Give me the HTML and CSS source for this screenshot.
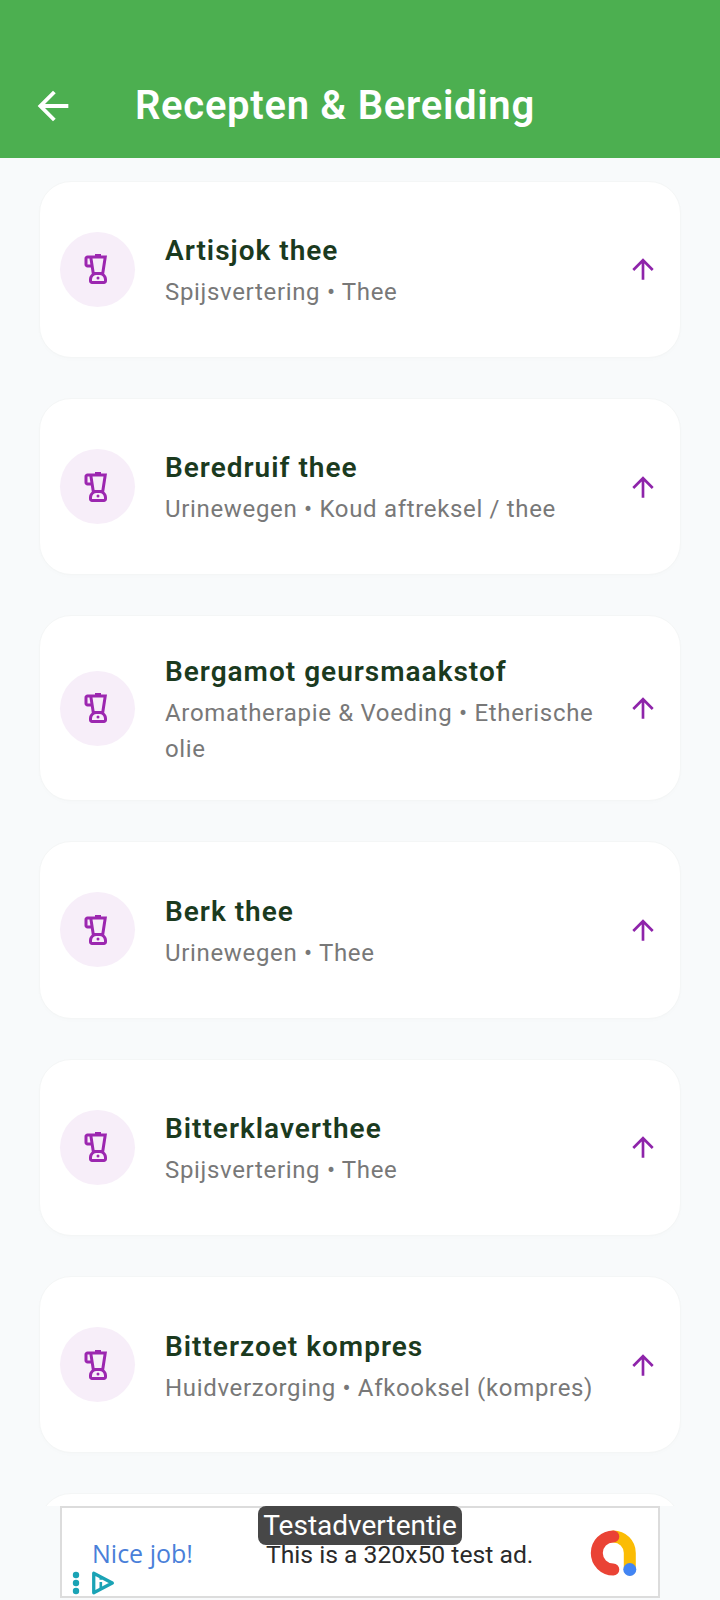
FILE: index.html
```html
<!DOCTYPE html>
<html lang="nl">
<head>
  <meta charset="utf-8">
  <meta name="viewport" content="width=device-width, initial-scale=1.0">
  <title>Recepten &amp; Bereiding</title>
  <link rel="stylesheet" href="styles.css">
</head>
<body>
  <svg class="icon-defs" width="0" height="0" aria-hidden="true">
    <defs>
      <symbol id="blender" viewBox="0 0 24 24">
        <path d="M16.13 15.13L18 3h-4V2h-4v1H5C3.9 3 3 3.9 3 5v4c0 1.1.9 2 2 2h2.23l.64 4.13C6.74 16.05 6 17.43 6 19v1c0 1.1.9 2 2 2h8c1.1 0 2-.9 2-2v-1c0-1.57-.74-2.95-1.87-3.87zM5 9V5h1.31l.62 4H5zm10.67-4l-1.38 9H9.72L8.33 5h7.34zM16 20H8v-1c0-1.65 1.35-3 3-3h2c1.65 0 3 1.35 3 3v1z"/>
        <circle cx="12" cy="18" r="1"/>
      </symbol>
      <symbol id="arrow-up" viewBox="0 0 24 24">
        <path d="M4 12l1.41 1.41L11 7.83V20h2V7.83l5.58 5.59L20 12l-8-8-8 8z"/>
      </symbol>
    </defs>
  </svg>

  <header class="app-bar">
    <svg class="back" viewBox="0 0 24 24"><path d="M20 11H7.83l5.59-5.59L12 4l-8 8 8 8 1.41-1.41L7.83 13H20v-2z"/></svg>
    <h1 class="app-title">Recepten &amp; Bereiding</h1>
  </header>

  <main class="list">
    <article class="card">
      <div class="avatar"><svg class="avatar-icon"><use href="#blender"/></svg></div>
      <div class="card-text">
        <h2 class="card-title">Artisjok thee</h2>
        <p class="card-sub">Spijsvertering • Thee</p>
      </div>
      <svg class="card-arrow"><use href="#arrow-up"/></svg>
    </article>
    <article class="card">
      <div class="avatar"><svg class="avatar-icon"><use href="#blender"/></svg></div>
      <div class="card-text">
        <h2 class="card-title">Beredruif thee</h2>
        <p class="card-sub">Urinewegen • Koud aftreksel / thee</p>
      </div>
      <svg class="card-arrow"><use href="#arrow-up"/></svg>
    </article>
    <article class="card">
      <div class="avatar"><svg class="avatar-icon"><use href="#blender"/></svg></div>
      <div class="card-text">
        <h2 class="card-title">Bergamot geursmaakstof</h2>
        <p class="card-sub">Aromatherapie &amp; Voeding • Etherische olie</p>
      </div>
      <svg class="card-arrow"><use href="#arrow-up"/></svg>
    </article>
    <article class="card">
      <div class="avatar"><svg class="avatar-icon"><use href="#blender"/></svg></div>
      <div class="card-text">
        <h2 class="card-title">Berk thee</h2>
        <p class="card-sub">Urinewegen • Thee</p>
      </div>
      <svg class="card-arrow"><use href="#arrow-up"/></svg>
    </article>
    <article class="card">
      <div class="avatar"><svg class="avatar-icon"><use href="#blender"/></svg></div>
      <div class="card-text">
        <h2 class="card-title">Bitterklaverthee</h2>
        <p class="card-sub">Spijsvertering • Thee</p>
      </div>
      <svg class="card-arrow"><use href="#arrow-up"/></svg>
    </article>
    <article class="card">
      <div class="avatar"><svg class="avatar-icon"><use href="#blender"/></svg></div>
      <div class="card-text">
        <h2 class="card-title">Bitterzoet kompres</h2>
        <p class="card-sub">Huidverzorging • Afkooksel (kompres)</p>
      </div>
      <svg class="card-arrow"><use href="#arrow-up"/></svg>
    </article>
    <article class="card"></article>
  </main>

  <!-- Test ad sits over the list -->
  <aside class="ad-bar">
    <div class="ad">
      <span class="ad-label">Testadvertentie</span>
      <span class="ad-nice">Nice job!</span>
      <span class="ad-text">This is a 320x50 test ad.</span>
      <svg class="ad-logo" viewBox="0 0 48 48">
        <path class="logo-yellow" d="M23.3 7.5a16.5 16.5 0 0 1 16.5 16.5v16.5"/>
        <path class="logo-red" d="M23.3 7.5a16.5 16.5 0 0 0 0 33"/>
        <circle class="logo-blue" cx="39.8" cy="40.5" r="6.5"/>
      </svg>
      <div class="ad-controls">
        <svg class="ad-dots" viewBox="0 0 8 24">
          <circle cx="4" cy="4" r="3.2"/>
          <circle cx="4" cy="12" r="3.2"/>
          <circle cx="4" cy="20" r="3.2"/>
        </svg>
        <svg class="ad-play" viewBox="0 0 22 22">
          <path class="play-outline" d="M2.5 2v18l17-9z"/>
          <path class="play-i" d="M9 10v6M9 6.5v1.6"/>
        </svg>
      </div>
    </div>
  </aside>
</body>
</html>
```

FILE: styles.css
```css
* {
  box-sizing: border-box;
}

html, body {
  margin: 0;
  height: 100%;
}

body {
  position: relative;
  width: 720px;
  height: 1600px;
  overflow: hidden;
  display: flex;
  flex-direction: column;
  background: #f8fafb;
  font-family: Roboto, "Noto Sans", sans-serif;
}

.icon-defs {
  position: absolute;
}

/* App bar */
.app-bar {
  flex: none;
  height: 158px;
  padding: 54px 0 0 30px;
  display: flex;
  align-items: center;
  background: #4caf50;
  color: #fff;
}

.back {
  width: 46px;
  height: 46px;
  fill: #fff;
}

.app-title {
  margin: 0 0 0 59px;
  font-size: 40px;
  font-weight: 600;
  line-height: 48px;
  letter-spacing: 0.7px;
}

/* List */
.list {
  flex: 1;
  min-height: 0;
  padding: 22.5px 39px 0 39px;
  display: flex;
  flex-direction: column;
  gap: 40px;
}

.card {
  flex: none;
  min-height: 177.4px;
  padding: 33px 21px 33px 20px;
  display: flex;
  align-items: center;
  background: #fff;
  border: 1px solid #f4f6f6;
  border-radius: 32px;
  box-shadow: 0 2px 4px rgba(0, 0, 0, 0.01);
}

.avatar {
  flex: none;
  width: 75px;
  height: 75px;
  display: flex;
  align-items: center;
  justify-content: center;
  border-radius: 50%;
  background: #f7eef9;
}

.avatar-icon {
  width: 36px;
  height: 36px;
  fill: #9c27b0;
}

.card-text {
  flex: 1;
  min-width: 0;
  padding: 4px 16px 0 30px;
}

.card-title {
  margin: 0 0 5px;
  font-size: 28px;
  font-weight: 600;
  line-height: 38px;
  letter-spacing: 1px;
  color: #1b3a1e;
}

.card-sub {
  margin: 0;
  font-size: 24px;
  line-height: 35.5px;
  letter-spacing: 0.67px;
  color: #787878;
}

.card-arrow {
  flex: none;
  width: 32px;
  height: 32px;
  fill: #8e24aa;
}

/* Ad banner */
.ad-bar {
  position: absolute;
  left: 0;
  right: 0;
  bottom: 0;
  height: 94px;
  padding: 0 60px 2px;
  background: #f8fafb;
}

.ad {
  position: relative;
  height: 92px;
  background: #fff;
  border: 2px solid #dcdcdc;
}

.ad-label {
  position: absolute;
  top: -2px;
  left: 196px;
  width: 204px;
  height: 39px;
  display: flex;
  align-items: center;
  justify-content: center;
  border-radius: 8px;
  background: #474747;
  color: #fff;
  font-size: 28px;
}

.ad-nice {
  position: absolute;
  left: 30px;
  top: 29px;
  font-family: "Open Sans", Roboto, sans-serif;
  font-size: 25px;
  line-height: 32px;
  color: #4a7fd9;
}

.ad-text {
  position: absolute;
  left: 204px;
  top: 31px;
  font-size: 24.7px;
  line-height: 32px;
  color: #2a2a2a;
}

.ad-logo {
  position: absolute;
  left: 528px;
  top: 21px;
  width: 48px;
  height: 48px;
}

.logo-red,
.logo-yellow {
  fill: none;
  stroke-width: 12px;
  stroke-linecap: round;
}

.logo-red {
  stroke: #ea4335;
}

.logo-yellow {
  stroke: #fbbc04;
}

.logo-blue {
  fill: #4285f4;
}

.ad-controls {
  position: absolute;
  left: 10px;
  bottom: 1px;
  display: flex;
  align-items: center;
  gap: 11px;
}

.ad-dots {
  width: 8px;
  height: 24px;
  fill: #1aa3b5;
}

.ad-play {
  width: 24px;
  height: 24px;
}

.play-outline {
  fill: none;
  stroke: #1aa3b5;
  stroke-width: 3px;
  stroke-linejoin: round;
}

.play-i {
  fill: none;
  stroke: #1aa3b5;
  stroke-width: 2.4px;
}
```
